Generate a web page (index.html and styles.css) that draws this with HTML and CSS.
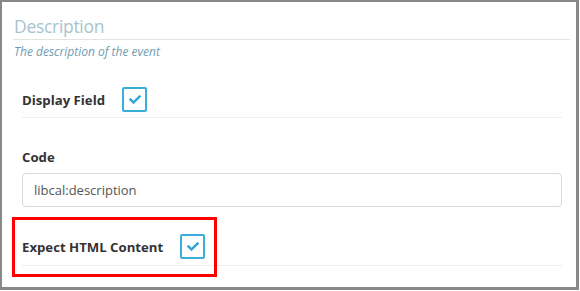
FILE: index.html
```html
<!DOCTYPE html>
<html lang="en">
<head>
    <meta charset="UTF-8">
    <meta name="viewport" content="width=device-width, initial-scale=1.0">
    <title>Description field</title>
    <link rel="stylesheet" href="styles.css">
</head>
<body>
    <div class="frame">
        <div class="section-head">
            <h2>Description</h2>
        </div>
        <p class="section-note">The description of the event</p>

        <div class="check-row">
            <label>Display Field</label>
            <span class="checkbox">
                <svg viewBox="0 64 512 384" width="12" height="9"><path d="M173.898 439.404l-166.4-166.4c-9.997-9.997-9.997-26.206 0-36.204l36.203-36.204c9.997-9.998 26.207-9.998 36.204 0L192 312.69 432.095 72.596c9.997-9.997 26.207-9.997 36.204 0l36.203 36.204c9.997 9.997 9.997 26.206 0 36.204l-294.4 294.401c-9.998 9.997-26.207 9.997-36.204-.001z"/></svg>
            </span>
        </div>

        <div class="text-group">
            <label for="code">Code</label>
            <input type="text" id="code" value="libcal:description">
        </div>

        <div class="check-row last">
            <label>Expect HTML Content</label>
            <span class="checkbox">
                <svg viewBox="0 64 512 384" width="12" height="9"><path d="M173.898 439.404l-166.4-166.4c-9.997-9.997-9.997-26.206 0-36.204l36.203-36.204c9.997-9.998 26.207-9.998 36.204 0L192 312.69 432.095 72.596c9.997-9.997 26.207-9.997 36.204 0l36.203 36.204c9.997 9.997 9.997 26.206 0 36.204l-294.4 294.401c-9.998 9.997-26.207 9.997-36.204-.001z"/></svg>
            </span>
        </div>

        <div class="highlight"></div>
    </div>
</body>
</html>
```

FILE: styles.css
```css
* {
    box-sizing: border-box;
}
body {
    margin: 0;
    padding: 0;
    background-color: #fff;
    font-family: "Open Sans", Arial, sans-serif;
    color: #333;
}
.frame {
    position: relative;
    width: 579px;
    height: 290px;
    border-style: solid;
    border-color: #888;
    border-width: 2px 3px 3px 2px;
    background-color: #fff;
}
.section-head {
    margin: 0 6px 0 11px;
    padding-top: 12px;
    padding-bottom: 1px;
    border-bottom: 1px solid #e3e3e3;
}
.section-head h2 {
    margin: 0 0 0 1px;
    font-size: 17.5px;
    line-height: 24px;
    letter-spacing: -0.3px;
    font-weight: normal;
    color: #a7c3ce;
}
.section-note {
    margin: 4px 0 0 12px;
    font-size: 12px;
    line-height: 16px;
    font-style: italic;
    color: #6f9db2;
}
.check-row {
    display: flex;
    align-items: center;
    margin: 27px 14px 0 20px;
    padding-bottom: 5px;
    border-bottom: 1px solid #eee;
}
.check-row.last {
    margin-top: 27px;
    padding-bottom: 6px;
}
.check-row label,
.text-group label {
    font-size: 13.2px;
    line-height: 18px;
    font-weight: bold;
    color: #333;
}
.check-row label {
    margin-right: 17px;
}
.checkbox {
    display: flex;
    align-items: center;
    justify-content: center;
    width: 25px;
    height: 25px;
    border: 2px solid #3aaedb;
    border-radius: 2px;
}
.checkbox svg {
    fill: #2fa6d6;
}
.text-group {
    margin: 30px 14px 0 20px;
}
.text-group label {
    display: block;
    margin-bottom: 7px;
}
.text-group input {
    display: block;
    width: 100%;
    height: 34px;
    padding: 0 11px;
    border: 1px solid #d6dbe2;
    border-radius: 4px;
    font-family: "Open Sans", Arial, sans-serif;
    font-size: 13px;
    color: #555;
    background-color: #fff;
}
.highlight {
    position: absolute;
    left: 10px;
    top: 215px;
    width: 205px;
    height: 60px;
    border: 3px solid #f00;
}
```
